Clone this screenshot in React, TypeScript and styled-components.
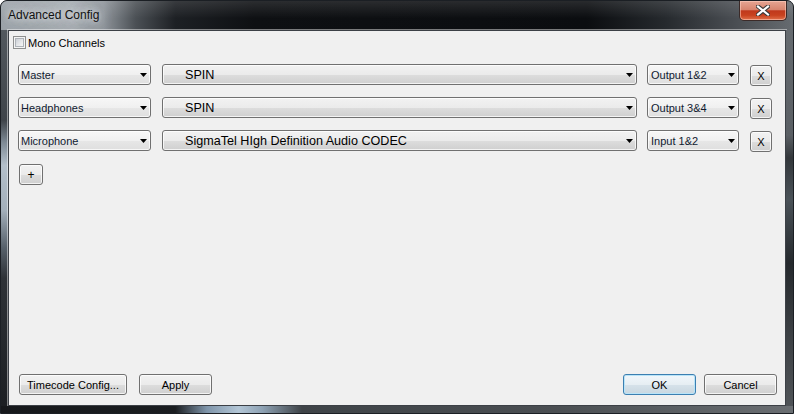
import React from "react";
import styled, { createGlobalStyle, css } from "styled-components";

const GlobalStyle = createGlobalStyle`
  html, body { margin: 0; padding: 0; background: #ffffff; }
  body { font-family: "Liberation Sans", Arial, sans-serif; }
  * { box-sizing: border-box; }
`;

const Window = styled.div`
  width: 794px;
  height: 414px;
  border: 1px solid #1b1f24;
  border-radius: 7px 7px 0 0;
  overflow: hidden;
  display: flex;
  flex-direction: column;
  background: #2a2e33;
`;

const TitleBar = styled.div`
  height: 29px;
  flex: none;
  display: flex;
  align-items: flex-start;
  padding-left: 7px;
  padding-right: 6px;
  background:
    linear-gradient(180deg, rgba(255,255,255,0.12) 0%, rgba(255,255,255,0) 60%),
    linear-gradient(90deg, #9ba2a8 0%, #a7adb2 9%, #8d9399 13%, #4b5055 17%, #1d2024 22%, #0e1013 32%, #0b0d10 74%, #262a2e 84%, #474b50 92%, #666b70 100%);
`;

const TitleText = styled.span`
  font-family: "Liberation Sans", Arial, sans-serif;
  font-size: 12px;
  line-height: 29px;
  color: #111;
  text-shadow: 0 0 6px rgba(235,238,240,0.95), 0 0 12px rgba(225,230,233,0.9), 0 0 18px rgba(210,215,220,0.7);
`;

const CloseButton = styled.div`
  margin-left: auto;
  width: 48px;
  height: 20px;
  border: 1px solid #3b2a28;
  border-top: none;
  border-radius: 0 0 5px 5px;
  display: flex;
  align-items: center;
  justify-content: center;
  background: linear-gradient(180deg, #e6a593 0%, #d8856f 45%, #c0391c 52%, #c8421f 75%, #e0704a 100%);
  box-shadow: inset 0 0 0 1px rgba(255,210,195,0.55);
`;

const Middle = styled.div`
  flex: 1;
  display: flex;
  min-height: 0;
`;

const LeftEdge = styled.div`
  width: 7px;
  flex: none;
  background: linear-gradient(180deg, #52585e 0%, #3f444a 24%, #7f8b96 30%, #b4c0cb 36%, #a3afba 48%, #56606a 58%, #2e3237 66%, #1c1f23 100%);
`;

const RightEdge = styled.div`
  width: 7px;
  flex: none;
  background: linear-gradient(180deg, #666b70 0%, #5a5f64 28%, #33373b 34%, #4a5258 45%, #25292d 62%, #3b3f43 80%, #4f5357 100%);
`;

const BottomEdge = styled.div`
  height: 7px;
  flex: none;
  background: linear-gradient(90deg, #16181b 0%, #1a1d20 22%, #7f95aa 26%, #b3c6d6 30%, #8ea2b4 33%, #3e4347 38%, #4a4e52 70%, #6a6e72 100%);
`;

const Client = styled.div`
  width: 778px;
  flex: none;
  border: 1px solid #3c4046;
  box-shadow: 0 0 0 1px rgba(255,255,255,0.45);
  background: #f0f0f0;
  display: flex;
  flex-direction: column;
  font-family: "Liberation Sans", Arial, sans-serif;
  font-size: 11px;
  color: #000;
`;

const CheckRow = styled.label`
  display: flex;
  align-items: center;
  gap: 2px;
  margin: 5px 0 0 4px;
  height: 13px;
  font-size: 11px;
`;

const CheckBox = styled.span`
  width: 13px;
  height: 13px;
  border: 1px solid #8e8f8f;
  background: #f4f4f4;
  padding: 1px;
  display: flex;
  & > span {
    flex: 1;
    border: 1px solid #aeb3b9;
    background: linear-gradient(135deg, #cbcfd5 0%, #e3e5e8 50%, #f6f6f6 100%);
  }
`;

const Rows = styled.div`
  display: flex;
  flex-direction: column;
  gap: 12px;
  margin-top: 15px;
  padding-left: 9px;
`;

const Row = styled.div`
  display: flex;
  align-items: flex-start;
  height: 21px;
`;

const bevel = css`
  border: 1px solid #707070;
  border-radius: 3px;
  box-shadow: inset 0 0 0 1px rgba(255,255,255,0.75);
`;

const Combo = styled.div<{ $w: number; $ml?: number; $pl: number; $device?: boolean }>`
  ${bevel};
  width: ${(p) => p.$w}px;
  margin-left: ${(p) => p.$ml ?? 0}px;
  height: 21px;
  display: flex;
  align-items: center;
  padding-left: ${(p) => p.$pl}px;
  padding-right: 3px;
  color: #101a30;
  font-size: 11px;
  background: ${(p) =>
    p.$device
      ? "linear-gradient(180deg, #f2f2f2 0%, #ebebeb 50%, #dddddd 51%, #cfcfcf 100%)"
      : "linear-gradient(180deg, #f7f7f7 0%, #f0f0f0 50%, #e7e7e7 51%, #dfdfdf 100%)"};
  ${(p) =>
    p.$device &&
    css`
      font-size: 12.6px;
      color: #000;
    `}
`;

const ComboText = styled.span`
  flex: 1;
  white-space: nowrap;
  overflow: hidden;
`;

const Arrow = () => (
  <svg width="7" height="4" viewBox="0 0 7 4" style={{ flex: "none" }}>
    <path d="M0 0H7L3.5 4Z" fill="#000" />
  </svg>
);

const Button = styled.button<{ $w: number; $ml?: number; $default?: boolean }>`
  ${bevel};
  width: ${(p) => p.$w}px;
  height: 21px;
  margin-left: ${(p) => p.$ml ?? 0}px;
  padding: 0;
  font-family: "Liberation Sans", Arial, sans-serif;
  font-size: 11px;
  color: #000;
  display: flex;
  align-items: center;
  justify-content: center;
  background: linear-gradient(180deg, #f2f2f2 0%, #ebebeb 50%, #dddddd 51%, #cfcfcf 100%);
  ${(p) =>
    p.$default &&
    css`
      border-color: #3c7fb1;
      box-shadow: inset 0 0 0 1px #b9e4f8;
      background: linear-gradient(180deg, #f1f7fb 0%, #e6eef3 50%, #d6e2ea 51%, #c9d7e0 100%);
    `}
`;

const RemoveButton = styled(Button)`
  margin-top: 1px;
`;

const AddButton = styled(Button)`
  margin: 13px 0 0 10px;
  font-size: 12px;
`;

const Spacer = styled.div`
  flex: 1;
`;

const Footer = styled.div`
  display: flex;
  padding: 0 8px 10px 10px;
`;

const Right = styled.div`
  margin-left: auto;
  display: flex;
`;

const CloseGlyph = () => (
  <svg width="14" height="11" viewBox="0 0 14 11">
    <path d="M2 1.5L12 9.5M12 1.5L2 9.5" stroke="#3a3a3a" strokeWidth="4.2" strokeLinecap="square" />
    <path d="M2 1.5L12 9.5M12 1.5L2 9.5" stroke="#ffffff" strokeWidth="2.2" strokeLinecap="square" />
  </svg>
);

const channels = [
  { name: "Master", device: "SPIN", port: "Output 1&2" },
  { name: "Headphones", device: "SPIN", port: "Output 3&4" },
  { name: "Microphone", device: "SigmaTel HIgh Definition Audio CODEC", port: "Input 1&2" },
];

export default function App() {
  return (
    <>
      <GlobalStyle />
      <Window>
        <TitleBar>
          <TitleText>Advanced Config</TitleText>
          <CloseButton>
            <CloseGlyph />
          </CloseButton>
        </TitleBar>
        <Middle>
          <LeftEdge />
          <Client>
            <CheckRow>
              <CheckBox>
                <span />
              </CheckBox>
              Mono Channels
            </CheckRow>
            <Rows>
              {channels.map((c) => (
                <Row key={c.name}>
                  <Combo $w={133} $pl={2}>
                    <ComboText>{c.name}</ComboText>
                    <Arrow />
                  </Combo>
                  <Combo $w={475} $ml={11} $pl={22} $device>
                    <ComboText>{c.device}</ComboText>
                    <Arrow />
                  </Combo>
                  <Combo $w={92} $ml={10} $pl={3}>
                    <ComboText>{c.port}</ComboText>
                    <Arrow />
                  </Combo>
                  <RemoveButton $w={22} $ml={11}>X</RemoveButton>
                </Row>
              ))}
            </Rows>
            <AddButton $w={24}>+</AddButton>
            <Spacer />
            <Footer>
              <Button $w={108}>Timecode Config...</Button>
              <Button $w={73} $ml={12}>Apply</Button>
              <Right>
                <Button $w={73} $default>OK</Button>
                <Button $w={73} $ml={8}>Cancel</Button>
              </Right>
            </Footer>
          </Client>
          <RightEdge />
        </Middle>
        <BottomEdge />
      </Window>
    </>
  );
}
